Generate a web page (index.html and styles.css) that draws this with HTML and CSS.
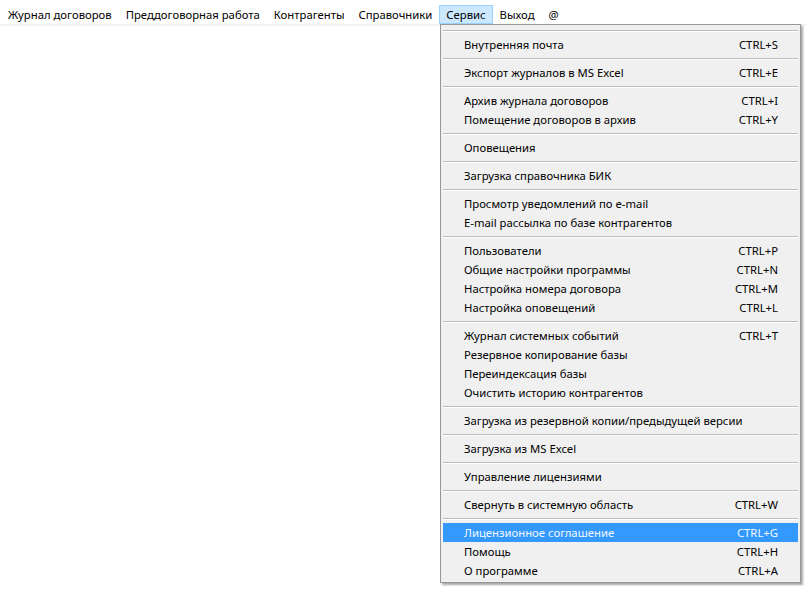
FILE: index.html
```html
<!DOCTYPE html>
<html lang="ru">
<head>
<meta charset="utf-8">
<title>Сервис</title>
<link rel="stylesheet" href="styles.css">
</head>
<body>
<div class="app">
  <nav class="menubar">
    <span class="mb-item">Журнал договоров</span>
    <span class="mb-item">Преддоговорная работа</span>
    <span class="mb-item">Контрагенты</span>
    <span class="mb-item">Справочники</span>
    <span class="mb-item active">Сервис</span>
    <span class="mb-item">Выход</span>
    <span class="mb-item">@</span>
  </nav>
  <div class="dropdown">
    <div class="sep"></div>
    <div class="mi"><span>Внутренняя почта</span><span class="sc">CTRL+S</span></div>
    <div class="sep"></div>
    <div class="mi"><span>Экспорт журналов в MS Excel</span><span class="sc">CTRL+E</span></div>
    <div class="sep"></div>
    <div class="mi"><span>Архив журнала договоров</span><span class="sc">CTRL+I</span></div>
    <div class="mi"><span>Помещение договоров в архив</span><span class="sc">CTRL+Y</span></div>
    <div class="sep"></div>
    <div class="mi"><span>Оповещения</span></div>
    <div class="sep"></div>
    <div class="mi"><span>Загрузка справочника БИК</span></div>
    <div class="sep"></div>
    <div class="mi"><span>Просмотр уведомлений по e-mail</span></div>
    <div class="mi"><span>E-mail рассылка по базе контрагентов</span></div>
    <div class="sep"></div>
    <div class="mi"><span>Пользователи</span><span class="sc">CTRL+P</span></div>
    <div class="mi"><span>Общие настройки программы</span><span class="sc">CTRL+N</span></div>
    <div class="mi"><span>Настройка номера договора</span><span class="sc">CTRL+M</span></div>
    <div class="mi"><span>Настройка оповещений</span><span class="sc">CTRL+L</span></div>
    <div class="sep"></div>
    <div class="mi"><span>Журнал системных событий</span><span class="sc">CTRL+T</span></div>
    <div class="mi"><span>Резервное копирование базы</span></div>
    <div class="mi"><span>Переиндексация базы</span></div>
    <div class="mi"><span>Очистить историю контрагентов</span></div>
    <div class="sep"></div>
    <div class="mi"><span>Загрузка из резервной копии/предыдущей версии</span></div>
    <div class="sep"></div>
    <div class="mi"><span>Загрузка из MS Excel</span></div>
    <div class="sep"></div>
    <div class="mi"><span>Управление лицензиями</span></div>
    <div class="sep"></div>
    <div class="mi"><span>Свернуть в системную область</span><span class="sc">CTRL+W</span></div>
    <div class="sep"></div>
    <div class="mi hl"><span>Лицензионное соглашение</span><span class="sc">CTRL+G</span></div>
    <div class="mi"><span>Помощь</span><span class="sc">CTRL+H</span></div>
    <div class="mi"><span>О программе</span><span class="sc">CTRL+A</span></div>
  </div>
</div>
</body>
</html>
```

FILE: styles.css
```css
html, body {
  margin: 0;
  padding: 0;
  background: #ffffff;
}
body {
  font-family: "Noto Sans", "Open Sans", sans-serif;
  font-size: 11.3px;
  color: #000000;
}
.app {
  position: relative;
  width: 807px;
  height: 590px;
  padding-top: 5px;
  box-sizing: border-box;
}
.menubar {
  display: flex;
  height: 19px;
  padding-left: 1px;
  border-bottom: 2px solid #f3f3f3;
  background: #ffffff;
}
.mb-item {
  display: flex;
  align-items: center;
  padding: 0 6px;
  border: 1px solid transparent;
  line-height: 17px;
}
.mb-item.active {
  background: #cce8ff;
  border-color: #99d1ff;
}
.dropdown {
  position: absolute;
  left: 440px;
  top: 24px;
  width: 355px;
  padding: 1px 2px 2px;
  background: #f0f0f0;
  border: 1px solid #979797;
  box-shadow: 2px 2px 2px rgba(0, 0, 0, 0.35);
}
.mi {
  display: flex;
  justify-content: space-between;
  align-items: center;
  height: 19px;
  padding: 0 20px 0 21px;
}
.mi.hl {
  background: #3399ff;
  color: #f4f8ff;
}
.sep {
  height: 9px;
  display: flex;
  align-items: center;
}
.sep::before {
  content: "";
  display: block;
  width: 100%;
  border-top: 1px solid #bcbcbc;
  border-bottom: 1px solid #ffffff;
}
```
